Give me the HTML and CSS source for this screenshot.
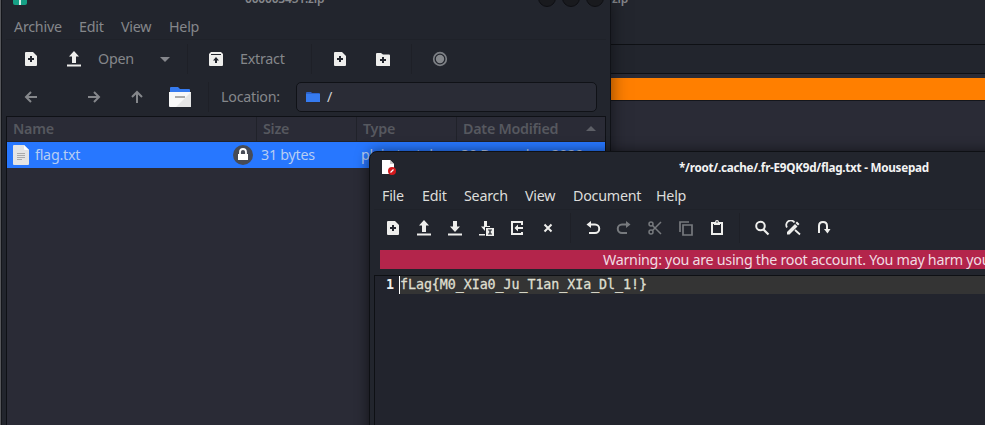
FILE: index.html
```
<!DOCTYPE html>
<html lang="en">
<head>
<meta charset="utf-8">
<title>Desktop</title>
<link rel="stylesheet" href="styles.css">
</head>
<body>
<svg class="defs" width="0" height="0">
  <symbol id="newfile" viewBox="0 0 16 16"><path fill="currentColor" fill-rule="evenodd" d="M3 1h7l4 4v9q0 1-1 1H3q-1 0-1-1V2q0-1 1-1zM7 5v2H5v2h2v2h2V9h2V7H9V5z"/></symbol>
  <symbol id="upload" viewBox="0 0 16 16"><path fill="currentColor" d="M8 0l5 5.500h-3V12H6V5.500H3zM1 13.500h14v2H1z"/></symbol>
  <symbol id="download" viewBox="0 0 16 16"><path fill="currentColor" d="M6 1h4v5.500h3L8 12 3 6.500h3zM1 13.500h14v2H1z"/></symbol>
  <symbol id="folder" viewBox="0 0 16 16"><path fill="#2c63cb" d="M1 4q0-1 1-1h4l1 1h7q1 0 1 1v3H1z"/><path fill="#367bf0" d="M1 5h14v8H1z"/></symbol>
</svg>
<div class="desktop">
  <section class="window back">
    <div class="back-head"><span>zip</span></div>
    <div class="back-bar"></div>
    <div class="back-orange"></div>
  </section>

  <section class="window archive">
    <div class="archive-title">
      <i class="app"></i><b>000003451.zip</b>
      <i class="dot"></i><i class="dot"></i><i class="dot"></i>
    </div>
    <nav class="menu"><span>Archive</span><span>Edit</span><span>View</span><span>Help</span></nav>
    <div class="tools">
      <svg class="lit"><use href="#newfile"/></svg>
      <svg class="lit"><use href="#upload"/></svg>
      <span class="label">Open</span>
      <svg viewBox="0 0 16 16"><path fill="#85878c" d="M3 6h10l-5 5z"/></svg>
      <i class="sep"></i>
      <svg class="lit" viewBox="0 0 16 16"><path fill="currentColor" fill-rule="evenodd" d="M3 1h10l2 2v11q0 1-1 1H2q-1 0-1-1V3zM3 3v1h10V3zM8 6L5 9.500h2V12h2V9.500h2z"/></svg>
      <span class="label">Extract</span>
      <i class="sep"></i>
      <svg class="lit"><use href="#newfile"/></svg>
      <svg class="lit" viewBox="0 0 16 16"><path fill="currentColor" fill-rule="evenodd" d="M2 2h4l2 1.500h6q1 0 1 1V15H2q-1 0-1-1V3q0-1 1-1zM7 6v2H5v2h2v2h2v-2h2V8H9V6z"/></svg>
      <i class="sep"></i>
      <svg viewBox="0 0 16 16"><circle cx="8" cy="8" r="6.300" fill="none" stroke="#7c7f84" stroke-width="1.700"/><circle cx="8" cy="8" r="4.200" fill="#85888c"/></svg>
    </div>
    <div class="nav">
      <svg viewBox="0 0 16 16"><path class="arrow" d="M14 8H3M8 3L3 8l5 5"/></svg>
      <svg viewBox="0 0 16 16"><path class="arrow" d="M2 8h11M8 3l5 5-5 5"/></svg>
      <svg viewBox="0 0 16 16"><path class="arrow" d="M8 14V3M3 8l5-5 5 5"/></svg>
      <svg class="home" viewBox="0 0 22 20"><path fill="#367bf0" d="M1 1q0-1 1-1h7l2 2h9q1 0 1 1v4H1z"/><path fill="#f8f8f8" d="M0 5h22v14q0 1-1 1H1q-1 0-1-1z"/><path fill="#e6e6e6" d="M22 5v15H7z"/><path fill="#aaa" d="M6 9h10v2H6z"/></svg>
      <i class="sep"></i>
      <span class="label">Location:</span>
      <div class="entry"><svg><use href="#folder"/></svg><span>/</span></div>
    </div>
    <div class="list">
      <div class="cols head"><span>Name</span><span>Size</span><span>Type</span><span>Date Modified<i class="sort"></i></span></div>
      <div class="cols row">
        <span>
          <svg class="doc" viewBox="0 0 16 20"><path fill="#e4e4e4" d="M1 0h10l5 5v14q0 1-1 1H1q-1 0-1-1V1q0-1 1-1z"/><path fill="#fff" d="M11 0l5 5h-4q-1 0-1-1z"/><path stroke="#aaa" d="M4 8.500h8M4 10.500h8M4 12.500h8M4 14.500h5"/></svg>
          <em>flag.txt</em>
          <svg class="lock" viewBox="0 0 20 20"><circle cx="10" cy="10" r="10" fill="#474b56"/><path fill="#fff" d="M5 9h10v6H5z"/><path fill="none" stroke="#fff" stroke-width="1.800" d="M7 9V7a3 3 0 0 1 6 0v2"/></svg>
        </span>
        <span>31 bytes</span><span>plain text doc</span><span>30 December 2020,</span>
      </div>
    </div>
  </section>

  <section class="window pad">
    <div class="pad-title">
      <svg viewBox="0 0 16 16"><path fill="#fff" d="M1 1h8l4 4v10H1z"/><path fill="#ccc" d="M9 1l4 4H9z"/><circle cx="11" cy="12" r="4" fill="#d3181c"/><path stroke="#fff" stroke-width="1.200" d="M9.500 13.500l3-3"/></svg>
      <b>*/root/.cache/.fr-E9QK9d/flag.txt - Mousepad</b>
    </div>
    <nav class="pad-menu"><span>File</span><span>Edit</span><span>Search</span><span>View</span><span>Document</span><span>Help</span></nav>
    <div class="pad-tools">
      <svg><use href="#newfile"/></svg>
      <svg><use href="#upload"/></svg>
      <svg><use href="#download"/></svg>
      <svg viewBox="0 0 16 16"><path fill="currentColor" d="M6 1h3v5h3v1H7v4L3 6.500h3zM1 14h6v1.500H1z"/><path fill="currentColor" fill-rule="evenodd" d="M8 8h8v8H8zM10 9.500v1h1.300v3H10v1h4v-1h-1.300v-3H14v-1z"/></svg>
      <svg viewBox="0 0 16 16"><path fill="none" stroke="currentColor" stroke-width="2" d="M13 5V2H3v12h10v-2"/><path fill="currentColor" d="M5.500 8L9 4.500V7h5v2H9v2.500z"/></svg>
      <svg viewBox="0 0 16 16"><path stroke="currentColor" stroke-width="2" d="M4.500 4.500l7 7M11.500 4.500l-7 7"/></svg>
      <i class="sep"></i>
      <svg viewBox="0 0 16 16"><path fill="none" stroke="currentColor" stroke-width="2" d="M4 4.500h6a4 4 0 0 1 0 8.500H4"/><path fill="currentColor" d="M1.500 4.500L6 1v7z"/></svg>
      <svg class="off" viewBox="0 0 16 16"><path fill="none" stroke="currentColor" stroke-width="2" d="M12 4.500H6A4 4 0 0 0 6 13h5"/><path fill="currentColor" d="M14.500 4.500L10 1v7z"/></svg>
      <svg class="off" viewBox="0 0 16 16"><g fill="none" stroke="currentColor" stroke-width="1.500"><circle cx="4" cy="4" r="2"/><circle cx="4" cy="12" r="2"/><path d="M5.500 5.500L14 14M5.500 10.500L14 2"/></g></svg>
      <svg class="off" viewBox="0 0 16 16"><path fill="none" stroke="currentColor" stroke-width="1.700" d="M2 12V2h9M5 5h9v10H5z"/></svg>
      <svg viewBox="0 0 16 16"><path fill="none" stroke="currentColor" stroke-width="2" d="M3 3h10v11H3z"/><path fill="currentColor" d="M5 2h1q0-2 2-2t2 2h1v3H5z"/><circle cx="8" cy="2" r=".8" fill="#22252d"/></svg>
      <i class="sep"></i>
      <svg viewBox="0 0 16 16"><circle cx="6.500" cy="6" r="4.300" fill="none" stroke="currentColor" stroke-width="2"/><path stroke="currentColor" stroke-width="2.200" d="M9.500 9.500l5 5"/></svg>
      <svg viewBox="0 0 16 16"><path fill="none" stroke="currentColor" stroke-width="1.800" d="M2 7.500A4.500 4.500 0 0 1 9.500 2.500M10 10l5 4.500"/><path fill="currentColor" d="M2 12l8-8 2.500 2.500-8 8H2zM10.500 3l1.500-1.500L14.500 4 13 5.500z"/></svg>
      <svg viewBox="0 0 16 16"><path fill="none" stroke="currentColor" stroke-width="2" d="M3 13V6q0-4 4-4t4 4v4"/><path fill="currentColor" d="M8 9h6.500L11.500 13.500z"/></svg>
    </div>
    <div class="warning">Warning: you are using the root account. You may harm your system.</div>
    <div class="editor"><b>1</b><code>fLag{M0_XIa0_Ju_T1an_XIa_Dl_1!}</code></div>
  </section>
</div>
</body>
</html>
```
FILE: styles.css
```
body { margin: 0; background: #22252d; }
* { box-sizing: border-box; }
.defs { position: absolute; }
.desktop {
  position: relative; width: 985px; height: 425px; overflow: hidden;
  font: 14.300px/20px "Noto Sans", sans-serif; letter-spacing: -.25px; color: #85878b; white-space: nowrap;
}
.desktop svg { width: 16px; height: 16px; display: block; flex: none; }
.window { position: absolute; overflow: hidden; background: #22252d; }

.back { left: 611px; top: 0; width: 374px; height: 425px; background: #2a2b36; }
.back-head { display: flex; height: 45px; background: #23262e; border-bottom: 1px solid #0e1014; }
.back-head span { margin-top: -9px; font-weight: 600; font-size: 12px; line-height: 16px; padding-left: 1px; }
.back-bar { height: 29px; background: #22252d; border-bottom: 1px solid #0e1014; }
.back-orange { margin-top: 4px; height: 23px; background: #ff7f00; border-bottom: 1px solid #14161c; }

.archive {
  left: 0; top: 0; width: 611px; height: 425px;
  border-left: 1px solid #55565a; border-right: 1px solid #101217;
  box-shadow: 0 0 16px rgba(0,0,0,.5); padding: 0 4px 0 5px;
}
.archive::before { content: ""; position: absolute; left: 0; top: 0; width: 1px; height: 425px; background: #14161b; }
.archive-title { height: 13px; display: flex; align-items: flex-start; }
.archive-title .app { flex: none; margin: -6px 0 0 7px; width: 14px; height: 11px; border-radius: 2px; background: linear-gradient(90deg, #16a085 6px, #d5efe8 6px 8px, #16a085 8px); }
.archive-title b { flex: none; margin: -9px 0 0 218px; width: 293px; font-size: 12px; line-height: 16px; font-weight: 600; letter-spacing: -.2px; }
.dot { width: 18px; height: 18px; margin: -11px 6px 0 0; border-radius: 50%; background: #191a1e; border: 1px solid #0e0f13; flex: none; }
.menu { display: grid; grid-template-columns: 65px 42px 48px 60px; height: 27px; padding: 4px 0 0 8px; border-bottom: 1px solid #1f2229; }
.tools { display: grid; grid-template-columns: 43px 32px 59px 30px 21px 32px 71px 21px 43px 36px 21px 16px; height: 30px; margin-top: 4px; padding-left: 17px; align-items: center; }
.sep { width: 1px; height: 30px; background: #1e2027; }
.lit { color: #eeeeec; }
.nav { display: grid; grid-template-columns: 63px 43px 40px 39px 13px 75px 301px; height: 30px; margin-top: 8px; padding-left: 17px; align-items: center; }
.nav .label { margin-top: -1px; }
.arrow { fill: none; stroke: #85878b; stroke-width: 2; }
.nav .home { width: 22px; height: 20px; }
.entry { height: 30px; border: 1px solid #101217; border-radius: 5px; background: #2a2c36; display: flex; align-items: center; padding-left: 8px; gap: 6px; color: #d0d1d4; }
.list { margin-top: 4px; width: 600px; height: 320px; border: 1px solid #0f1116; background: #2a2b36; }
.cols { display: grid; grid-template-columns: 250px 100px 100px 1fr; }
.head { height: 25px; font-weight: 600; color: #56585f; border-bottom: 1px solid #20222a; }
.head span { padding: 2px 0 0 6px; border-right: 1px solid #20222a; height: 24px; display: flex; }
.head span:last-child { border: 0; }
.sort { margin: 7px 9px 0 auto; width: 0; height: 0; border: 5px solid transparent; border-top: 0; border-bottom-color: #5d5f66; }
.row { height: 26px; background: #2777ff; color: #b6cdf3; }
.row > span { padding: 3px 0 0 4px; overflow: hidden; }
.row > span:first-child { display: flex; align-items: center; gap: 6px; padding: 0 3px 0 6px; }
.row em { font-style: normal; }
.row .doc { height: 20px; }
.row .lock { width: 20px; height: 20px; margin: 0 1px 0 auto; }

.pad { left: 369px; top: 151px; width: 640px; height: 290px; border: 1px solid #0e1014; border-radius: 8px 0 0 0; box-shadow: 0 1px 14px rgba(0,0,0,.6); color: #dddddb; }
.pad-title { height: 30px; display: flex; align-items: center; padding-left: 11px; }
.pad-title b { margin-left: 282px; font-size: 11.700px; font-weight: 700; letter-spacing: -.26px; color: #f3f3f3; }
.pad-menu { display: grid; grid-template-columns: 40px 42px 61px 48px 83px 60px; margin-left: 4px; padding: 4px 0 0 8px; height: 28px; border-bottom: 1px solid #1f2229; }
.pad-tools { display: grid; grid-template-columns: repeat(5, 31px) 30px 15px repeat(4, 31px) 30px 15px repeat(3, 31px); height: 30px; margin-top: 3px; padding-left: 15px; align-items: center; color: #eeeeec; }
.off { color: #777a7e; }
.warning { margin: 7px 0 0 10px; height: 19px; line-height: 19px; padding-left: 223px; background: #b3254b; color: #f0dce2; letter-spacing: -.28px; }
.editor { margin: 6px 0 0 4px; height: 180px; border: 1px solid #0e1014; border-right: 0; background: #22242d; display: flex; font: 13.330px/18px "DejaVu Sans Mono", monospace; letter-spacing: -.060px; color: #eeeeec; }
.editor b { width: 24px; text-align: right; padding-right: 5px; }
.editor code { flex: 1; height: 18px; background: #343434; border-left: 1px solid #fff; font: inherit; color: #dedecf; -webkit-text-stroke: .3px #dedecf; }
```
